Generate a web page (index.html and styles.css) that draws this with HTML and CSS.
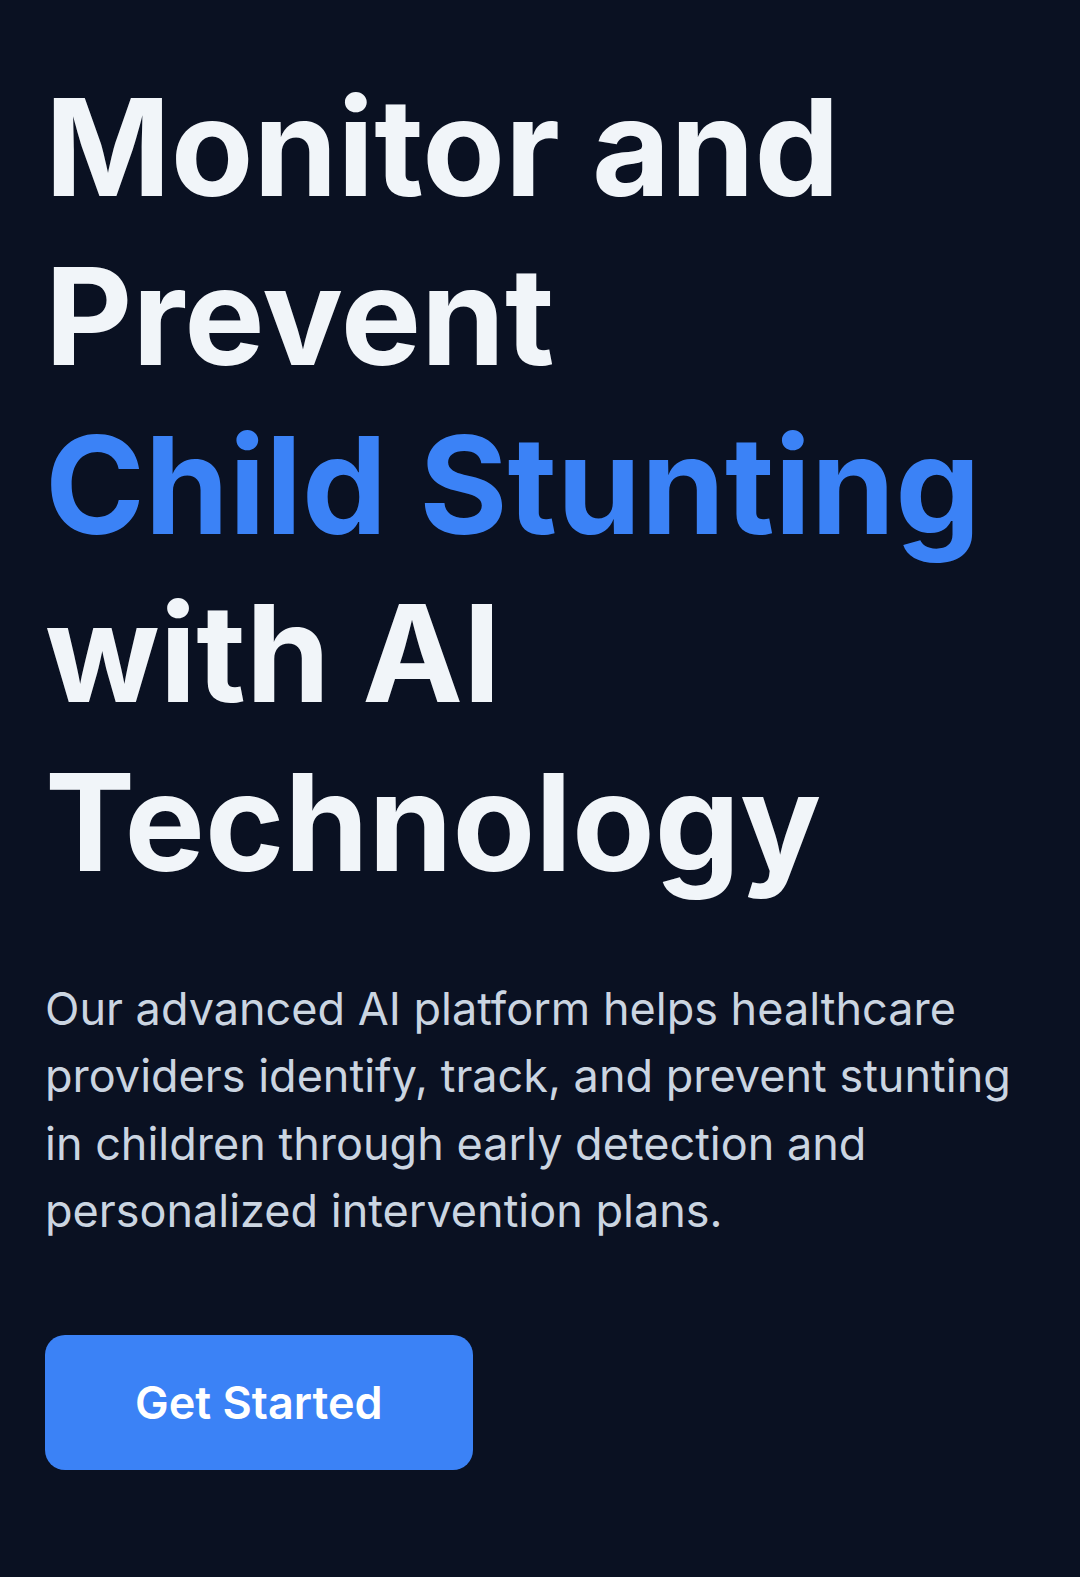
FILE: index.html
```html
<!DOCTYPE html>
<html lang="en">
<head>
<meta charset="utf-8">
<title>Monitor and Prevent Child Stunting</title>
<link rel="stylesheet" href="styles.css">
</head>
<body>
<main class="hero">
  <h1 class="hero-title">Monitor and Prevent <span class="accent">Child Stunting</span> with AI Technology</h1>
  <p class="hero-text">Our advanced AI platform helps healthcare providers identify, track, and prevent stunting in children through early detection and personalized intervention plans.</p>
  <div class="hero-actions">
    <a class="btn-primary" href="#">Get Started</a>
  </div>
</main>
</body>
</html>
```
FILE: styles.css
```css
html, body {
  margin: 0;
  padding: 0;
  background: #0a1122;
  min-height: 100%;
}
body {
  font-family: Inter, "Noto Sans", sans-serif;
  -webkit-font-smoothing: antialiased;
}
.hero {
  box-sizing: border-box;
  min-height: 1577px;
  padding: 63px 45px 0 45px;
  display: flex;
  flex-direction: column;
  align-items: flex-start;
}
.hero-title {
  margin: 0 0 68px 0;
  font-size: 135px;
  line-height: 168.75px;
  font-weight: 700;
  color: #f1f5f9;
  letter-spacing: 0;
  width: 990px;
}
.accent {
  display: block;
  color: #3b82f6;
}
.hero-text {
  margin: 0 0 90px 0;
  font-size: 45px;
  line-height: 67.5px;
  font-weight: 400;
  color: #cbd5e1;
}
.hero-actions {
  display: flex;
}
.btn-primary {
  display: inline-block;
  background: #3b82f6;
  color: #ffffff;
  text-decoration: none;
  font-size: 45px;
  line-height: 63px;
  font-weight: 600;
  padding: 36px 90px;
  border-radius: 20px;
}
```
